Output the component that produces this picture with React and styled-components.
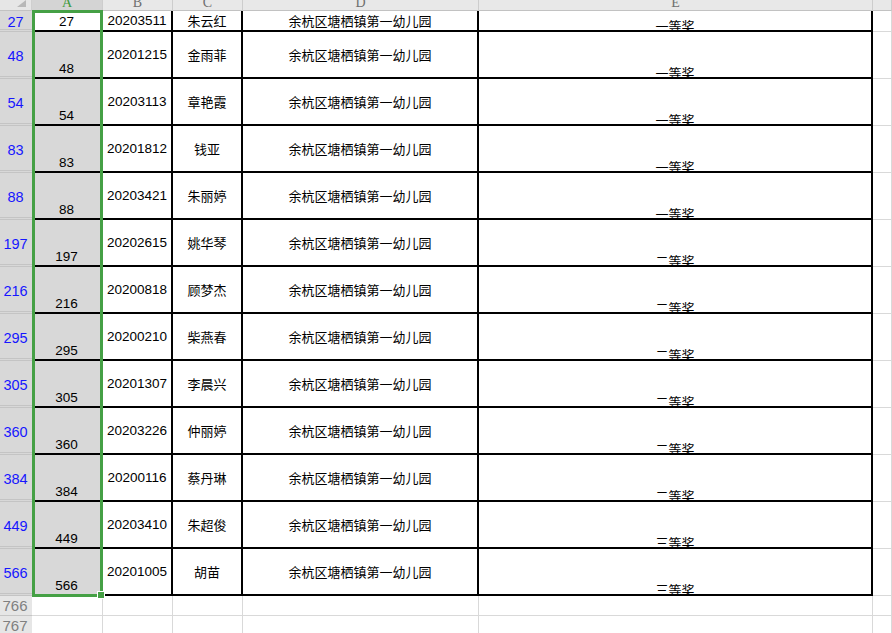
import React from "react";
import styled, { createGlobalStyle } from "styled-components";

const GlobalStyle = createGlobalStyle`
  body {
    margin: 0;
    background: #fff;
    overflow: hidden;
  }
`;

const cjk = `"Noto Sans CJK SC", "Liberation Sans", sans-serif`;
const num = `"Liberation Sans", Arial, sans-serif`;

const Sheet = styled.div`
  position: relative;
  width: 892px;
  height: 633px;
  overflow: hidden;
  display: grid;
  grid-template-columns: 32px 71px 70px 70px 236px 394px 1fr;
  grid-template-rows: 11px 21px repeat(12, 47px) 20px 20px;
  color: #000;
`;

const Corner = styled.div`
  background: #e6e6e6;
  border-bottom: 1px solid #c2c2c2;
  border-right: 1px solid #cfcfcf;
  box-sizing: border-box;
  display: flex;
  justify-content: flex-end;
  align-items: flex-start;
  padding-right: 5px;
`;

const ColHead = styled.div`
  box-sizing: border-box;
  background: ${(p) => (p.$active ? "#d4d4d4" : "#e8e8e8")};
  color: ${(p) => (p.$active ? "#3d9a3d" : "#6f6f6f")};
  border-bottom: 1px solid #c2c2c2;
  border-right: 1px solid #cdcdcd;
  overflow: hidden;
  display: flex;
  justify-content: center;
  align-items: flex-end;
  font-family: "Liberation Serif", serif;
  font-size: 14px;
  line-height: 14px;

  span {
    margin-bottom: 0;
  }
`;

const RowHead = styled.div`
  box-sizing: border-box;
  background: ${(p) => (p.$selected ? "#d8d8d8" : "#e6e6e6")};
  color: ${(p) => (p.$selected ? "#1616ff" : "#808080")};
  border-bottom: ${(p) => (p.$selected ? "3px double #c4c4c4" : "1px solid #c6c6c6")};
  display: flex;
  align-items: center;
  justify-content: center;
  font-family: ${num};
  font-size: ${(p) => (p.$selected ? "14.5px" : "15px")};
  padding: ${(p) => (p.$selected ? "3px 1px 0 0" : "0 2px 0 0")};
`;

const Cell = styled.div`
  box-sizing: border-box;
  background: ${(p) => p.$bg || "#fff"};
  border-right: 2px solid #000;
  border-bottom: 2px solid #000;
  overflow: hidden;
  display: flex;
  justify-content: center;
  align-items: ${(p) => (p.$bottom ? "flex-end" : "center")};
  padding-bottom: ${(p) => (p.$bottom ? "1px" : "0")};
  font-family: ${(p) => (p.$cjk ? cjk : num)};
  font-size: ${(p) => (p.$cjk ? "13px" : "13.5px")};
  line-height: 14px;
  white-space: nowrap;
`;

const Sunk = styled.span`
  margin-bottom: -4px;
`;

const Blank = styled.div`
  box-sizing: border-box;
  background: #fff;
  border-right: 1px solid #d9d9d9;
  border-bottom: 1px solid #d9d9d9;
`;

const Selection = styled.div`
  position: absolute;
  left: 32px;
  top: 10px;
  width: 71px;
  height: 587px;
  box-sizing: border-box;
  border: 3px solid #45a045;
  pointer-events: none;
`;

const Handle = styled.div`
  position: absolute;
  right: -5px;
  bottom: -5px;
  width: 6px;
  height: 6px;
  background: #45a045;
  border: 1px solid #fff;
`;

const rows = [
  [27, "20203511", "朱云红", "一等奖"],
  [48, "20201215", "金雨菲", "一等奖"],
  [54, "20203113", "章艳霞", "一等奖"],
  [83, "20201812", "钱亚", "一等奖"],
  [88, "20203421", "朱丽婷", "一等奖"],
  [197, "20202615", "姚华琴", "二等奖"],
  [216, "20200818", "顾梦杰", "二等奖"],
  [295, "20200210", "柴燕春", "二等奖"],
  [305, "20201307", "李晨兴", "二等奖"],
  [360, "20203226", "仲丽婷", "二等奖"],
  [384, "20200116", "蔡丹琳", "二等奖"],
  [449, "20203410", "朱超俊", "三等奖"],
  [566, "20201005", "胡苗", "三等奖"],
];

const school = "余杭区塘栖镇第一幼儿园";

const App = () => (
  <>
    <GlobalStyle />
    <Sheet>
      <Corner>
        <svg width="9" height="7" viewBox="0 0 9 7">
          <polygon points="9,0 9,7 0,7" fill="#b8b8b8" />
        </svg>
      </Corner>
      {["A", "B", "C", "D", "E", ""].map((l, i) => (
        <ColHead key={i} $active={l === "A"}>
          <span>{l}</span>
        </ColHead>
      ))}

      {rows.map(([n, id, name, prize], i) => (
        <React.Fragment key={n}>
          <RowHead $selected>{n}</RowHead>
          <Cell $bottom $bg={i === 0 ? "#fff" : "#d8d8d8"}>{n}</Cell>
          <Cell>{id}</Cell>
          <Cell $cjk>{name}</Cell>
          <Cell $cjk>{school}</Cell>
          <Cell $cjk $bottom>
            <Sunk>{prize}</Sunk>
          </Cell>
          <Blank />
        </React.Fragment>
      ))}

      {[766, 767].map((n) => (
        <React.Fragment key={n}>
          <RowHead>{n}</RowHead>
          {[0, 1, 2, 3, 4, 5].map((c) => (
            <Blank key={c} />
          ))}
        </React.Fragment>
      ))}

      <Selection>
        <Handle />
      </Selection>
    </Sheet>
  </>
);

export default App;
